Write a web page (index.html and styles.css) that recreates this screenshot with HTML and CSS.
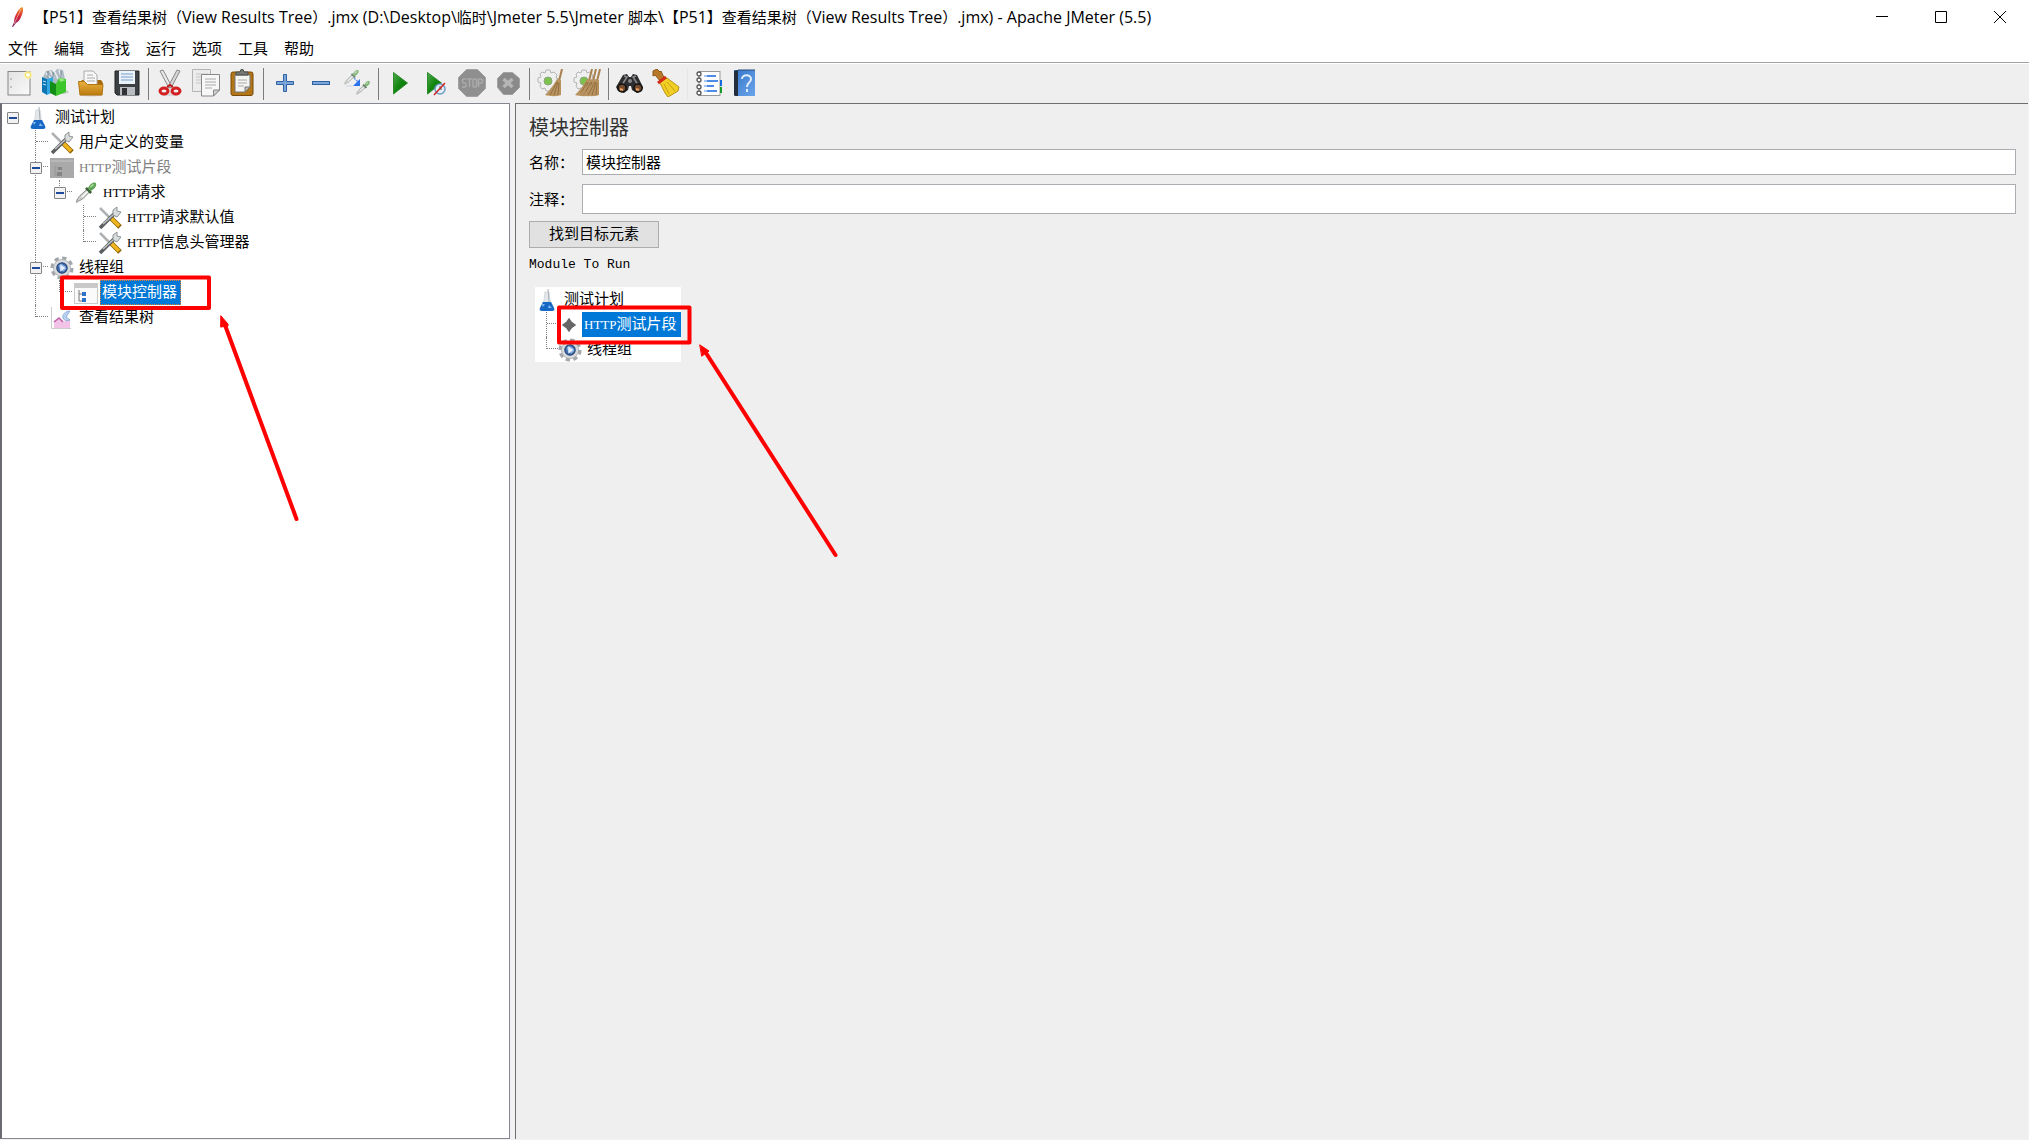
FILE: index.html
```
<!DOCTYPE html>
<html lang="zh-CN">
  <head>
    <meta charset="UTF-8">
    <title>Apache JMeter (5.5)</title>
    <link rel="stylesheet" href="styles.css">
  </head>
  <body>
    <!-- Shared icon shapes -->
    <svg class="defs" width="0" height="0" aria-hidden="true">
      <defs>
        <linearGradient id="g-paper" x1="0" y1="0" x2="1" y2="1">
          <stop offset="0" stop-color="#e2e2e2"/><stop offset="1" stop-color="#fafafa"/>
        </linearGradient>
        <linearGradient id="g-folder" x1="0" y1="0" x2="0" y2="1">
          <stop offset="0" stop-color="#e8b040"/><stop offset="1" stop-color="#bc7a0c"/>
        </linearGradient>
        <linearGradient id="g-play" x1="0" y1="0" x2="1" y2="1">
          <stop offset="0" stop-color="#4fa94f"/><stop offset="0.5" stop-color="#12860f"/><stop offset="1" stop-color="#0a6b0a"/>
        </linearGradient>
        <linearGradient id="g-book" x1="0" y1="0" x2="1" y2="1">
          <stop offset="0" stop-color="#3577cc"/><stop offset="1" stop-color="#6ba4ea"/>
        </linearGradient>
        <linearGradient id="g-feather" x1="0" y1="1" x2="0" y2="0">
          <stop offset="0" stop-color="#7b2a75"/><stop offset="0.5" stop-color="#d3203a"/><stop offset="1" stop-color="#f59a23"/>
        </linearGradient>

        <symbol id="feather" viewBox="0 0 14 22">
          <path d="M11 1c2 1 1 6-1 10-1 3-3 5-5 6l-3 4-1 0 2-5c0-5 4-13 8-15z" fill="url(#g-feather)"/>
          <path d="M10 3 3 18" stroke="#f6c1a8" stroke-width="0.7" fill="none"/>
        </symbol>

        <symbol id="new" viewBox="0 0 28 28">
          <rect x="3" y="2.500" width="22" height="23.500" fill="url(#g-paper)" stroke="#858585"/>
          <path d="M6 9v2M6 17v2" stroke="#999"/>
          <circle cx="23" cy="6" r="4" fill="#fff6a0" opacity="0.8"/>
          <circle cx="23" cy="6" r="2.500" fill="#fff" stroke="#f0dc50"/>
        </symbol>

        <symbol id="templates" viewBox="0 0 28 28">
          <ellipse cx="19" cy="23" rx="9" ry="2" fill="#c4cfc4"/>
          <path d="M2 8 5 2l6-1 2 3 3-4 6 1 2 9-9 8z" fill="#aebbc3"/>
          <path d="M5 4l5 6M9 2l4 7M14 3l3 7M18 1l3 9" stroke="#e8eef2" stroke-width="1.500"/>
          <path d="M7 2v7M12 3v6M20 2v7" stroke="#73838c"/>
          <path d="M1 8l5 2v16l-5-3z" fill="#0c75b4"/>
          <path d="M6 10l6-2v15l-6 3z" fill="#32a7e2"/>
          <path d="M2 12l3 1M2 15l3 1" stroke="#bfe6ff"/>
          <path d="M9 12l6 3v12l-6-3z" fill="#128d16"/>
          <path d="M15 15l3-6 7 1v13l-10 4z" fill="#3cc62c"/>
          <path d="M18 9l1 4 6-2" fill="#93e880"/>
        </symbol>

        <symbol id="open" viewBox="0 0 28 28">
          <ellipse cx="14" cy="26" rx="12" ry="1.500" fill="#cfcac0"/>
          <path d="M3 14l2-3h19l2 3v4H3z" fill="#a8690c"/>
          <path d="M7 17V2h9l4 4v11z" fill="#f7f7f7" stroke="#aaa"/>
          <path d="M10 6h6M10 9h8M10 12h8" stroke="#aaa"/>
          <path d="M1.500 12.500h6l3 3h15.500l-1 10.500h-22z" fill="url(#g-folder)" stroke="#b0750f"/>
        </symbol>

        <symbol id="save" viewBox="0 0 28 28">
          <path d="M2 2h24v24H4l-2-2z" fill="#3c3f43" stroke="#222"/>
          <rect x="6" y="2" width="16" height="13" fill="#eaf2fa"/>
          <path d="M8 5h12M8 8h12M8 11h12" stroke="#9fbbd8" stroke-width="1.500"/>
          <rect x="7" y="18" width="15" height="8" fill="#b9bcc0"/>
          <rect x="9" y="19" width="5" height="7" fill="#303236"/>
        </symbol>

        <symbol id="cut" viewBox="0 0 28 28">
          <ellipse cx="14" cy="25" rx="10" ry="2" fill="#dadada"/>
          <path d="M4 2l3-1 9 17-3 1z" fill="#e8e8e8" stroke="#888"/>
          <path d="M24 2l-3-1-9 17 3 1z" fill="#d5d5d5" stroke="#888"/>
          <ellipse cx="8" cy="22" rx="4" ry="3" fill="none" stroke="#d42020" stroke-width="3"/>
          <ellipse cx="20" cy="22" rx="4" ry="3" fill="none" stroke="#d42020" stroke-width="3"/>
          <path d="M11 18l3-2 3 2" fill="none" stroke="#c01818" stroke-width="2"/>
        </symbol>

        <symbol id="copy" viewBox="0 0 28 28">
          <path d="M.500.500h18v22H.500z" fill="#ececec" stroke="#b3b3b3"/>
          <path d="M4 5h12M4 8h5M4 11h5M4 14h5" stroke="#c5c5c5"/>
          <path d="M9.500 5.500h18V21l-6 6h-12z" fill="#f7f7f7" stroke="#888"/>
          <path d="M13 10h11M13 13h11M13 16h11M13 19h7" stroke="#aaa"/>
          <path d="M27.500 21h-6v6z" fill="#d0d0d0" stroke="#888"/>
        </symbol>

        <symbol id="paste" viewBox="0 0 28 28">
          <rect x="3" y="3" width="22" height="23.500" rx="2" fill="#b27618" stroke="#7a4b07"/>
          <path d="M7 6h15v12l-5 5H7z" fill="#f4f4f2" stroke="#777"/>
          <path d="M10 11h9M10 14h9M10 17h6" stroke="#aaa"/>
          <path d="M22 18h-5v5z" fill="#bdbdb8" stroke="#777"/>
          <path d="M8 6V3h4l1-2.500h2L16 3h4v3z" fill="#777a74" stroke="#4b4d48"/>
        </symbol>

        <symbol id="plus" viewBox="0 0 28 28">
          <path d="M12.500 5.500h3v7h7v3h-7v7h-3v-7h-7v-3h7z" fill="#7ba6d8" stroke="#2f62a5"/>
        </symbol>

        <symbol id="minus" viewBox="0 0 28 28">
          <rect x="5.500" y="12.500" width="17" height="3" fill="#7ba6d8" stroke="#2f62a5"/>
        </symbol>

        <symbol id="dropper" viewBox="0 0 28 28">
          <path d="M3 25c0-4 2-5 4-8l9-8 3 3-9 9c-3 2-5 2-7 4z" fill="#c9cec9" stroke="#7c827c"/>
          <path d="M9 19l8-8" stroke="#fff" stroke-width="1.500"/>
          <path d="M14 8l6 6" stroke="#3e5c3b" stroke-width="3"/>
          <path d="M16 9c2-5 6-8 9-7 2 2 1 6-6 10z" fill="#5fa354"/>
          <path d="M19 7l4-3" stroke="#a3d69a" stroke-width="2"/>
        </symbol>

        <symbol id="toggle" viewBox="0 0 28 28">
          <g opacity="0.700"><use href="#dropper" x="0" y="0" width="17" height="17"/></g>
          <g opacity="0.800"><use href="#dropper" x="12" y="11" width="16" height="16"/></g>
          <path d="M3 17h6" stroke="#ccd8e8"/>
          <path d="M11 9l4 4" stroke="#6f9ced" stroke-width="1.500" stroke-dasharray="2 1"/>
          <path d="M17 10v7h-7z" fill="#2b72ee"/>
        </symbol>

        <symbol id="start" viewBox="0 0 28 28">
          <path d="M7.500 3.500l14 10.500-14 11z" fill="url(#g-play)" stroke="#2e8b2e"/>
        </symbol>

        <symbol id="start-now" viewBox="0 0 28 28">
          <path d="M5.500 3.500l14 10.500-14 11z" fill="url(#g-play)" stroke="#2e8b2e"/>
          <circle cx="18" cy="20" r="5" fill="#e3effa" stroke="#6e9cc8" stroke-width="1.500"/>
          <path d="M18 17v3h2" fill="none" stroke="#555"/>
          <path d="M12 26L23 14" stroke="#d12020" stroke-width="1.500"/>
        </symbol>

        <symbol id="stop" viewBox="0 0 28 28">
          <path d="M8.500.500h11l8 8v11l-8 8h-11l-8-8v-11z" fill="#8f8f8f" stroke="#a2a2a2"/>
          <g fill="none" stroke="#ababab" stroke-width="1.500">
            <path d="M8 10H5.500l-1 1v2l1 1H7l1 1v2l-1 1H4M9 10h5M11.500 10v8"/>
            <rect x="15" y="10" width="3.500" height="8" rx="1"/>
            <path d="M20.500 18v-8h3l1 1v2l-1 1h-3"/>
          </g>
        </symbol>

        <symbol id="shutdown" viewBox="0 0 28 28">
          <path d="M9.500 3.500h9l7 6v9l-7 7h-9l-6-7v-9z" fill="#8a8a8a" stroke="#a2a2a2"/>
          <path d="M9.500 10l9 8M18.500 10l-9 8" stroke="#b5b5b5" stroke-width="3.500"/>
        </symbol>

        <symbol id="gear" viewBox="0 0 28 28">
          <circle cx="14" cy="14" r="11.500" fill="none" stroke="#a3a6aa" stroke-width="4" stroke-dasharray="5 4"/>
          <circle cx="14" cy="14" r="10" fill="#d9dbdd" stroke="#aaadb1" stroke-width="1"/>
          <circle cx="14" cy="14" r="6" fill="#426dad" stroke="#28487c" stroke-width="1.500"/>
          <path d="M10 11l3-2 5 3 1 3-3 3-4-1z" fill="#88addf"/>
          <path d="M12 10l6 4-6 4z" fill="#e6effb"/>
        </symbol>

        <symbol id="broom" viewBox="0 0 28 28">
          <path d="M25 0l-3 12" stroke="#a98250" stroke-width="2"/>
          <path d="M20 10l4 1v15c-6 2-11 1-16 0 4-4 8-9 12-16z" fill="#b8925f"/>
          <path d="M20 13l-7 13M21 13l-4 13M22 14l-1 12" stroke="#927042"/>
        </symbol>

        <symbol id="cog" viewBox="0 0 28 28">
          <path d="M9 1h4l1 3 3-1 3 3-1 3 3 1v4l-3 1 1 3-3 2-3-1-1 3H9l-1-3-3 1-2-3 1-3-3-1V9l3-1-1-3 2-2 3 1z" fill="#efefef" stroke="#b5b5b5"/>
          <circle cx="11" cy="12" r="4" fill="#7cc24d" stroke="#8ba67c"/>
        </symbol>

        <symbol id="clear" viewBox="0 0 28 28">
          <use href="#cog" width="28" height="28"/>
          <use href="#broom" width="28" height="28"/>
        </symbol>

        <symbol id="clear-all" viewBox="0 0 28 28">
          <use href="#cog" x="0" width="28" height="28"/>
          <use href="#broom" x="-6" width="28" height="28"/>
          <use href="#broom" x="-2" width="28" height="28"/>
          <use href="#broom" x="2" width="28" height="28"/>
        </symbol>

        <symbol id="search" viewBox="0 0 28 28">
          <path d="M7 6l4-1 2 3h2l2-3 4 1 6 12-1 4-5 2-5-3-1-4h-2l-1 4-4 3-6-2-2-4z" fill="#2d2d2f"/>
          <path d="M8 7l3 1-5 8M20 7l-3 1 5 8" fill="none" stroke="#8b8b8f" stroke-width="1.500"/>
          <circle cx="6" cy="19" r="4" fill="#764a2c" stroke="#111" stroke-width="1.500"/>
          <circle cx="22" cy="19" r="4" fill="#764a2c" stroke="#111" stroke-width="1.500"/>
          <path d="M4 20l3 1M20 20l3 1" stroke="#e3a069" stroke-width="2"/>
          <circle cx="14" cy="12" r="2" fill="#86868a"/>
        </symbol>

        <symbol id="reset" viewBox="0 0 28 28">
          <path d="M1 2l4-2 3 3 1-1 4 9-4 2-6-7-2 1z" fill="#b97728" stroke="#8b5718"/>
          <path d="M7 12l8-3 12 9-1 4-10 6-3-4z" fill="#f1cf25" stroke="#b99312"/>
          <path d="M12 15l5 10M15 13l8 9" stroke="#c8a011"/>
          <path d="M6 14l8-6" stroke="#d32b18" stroke-width="3"/>
        </symbol>

        <symbol id="functions" viewBox="0 0 28 28">
          <rect x="4" y="2.500" width="21" height="24" fill="#fdfdfd" stroke="#999"/>
          <path d="M26 11v6" stroke="#1769e0" stroke-width="2"/>
          <path d="M26 18v6" stroke="#149c25" stroke-width="2"/>
          <path d="M9 7h3M9 12h3M9 17h3M9 22h3" stroke="#8ab6f5" stroke-width="1.500"/>
          <path d="M12 7h9M12 12h11M12 17h7M12 22h10" stroke="#1465dd" stroke-width="1.500"/>
          <g fill="#fff" stroke="#555" stroke-width="1.300">
            <circle cx="4" cy="5" r="2"/><circle cx="4" cy="11" r="2"/><circle cx="4" cy="18" r="2"/><circle cx="4" cy="24" r="2"/>
          </g>
        </symbol>

        <symbol id="help" viewBox="0 0 28 28">
          <path d="M3 1h21v26H4l-1-1z" fill="url(#g-book)"/>
          <path d="M3 2l4-1v26H4l-1-1z" fill="#222e3e"/>
          <path d="M7 1h17" stroke="#2b4c79"/>
          <path d="M11 10c0-5 9-5 9 0 0 4-4 3-4 8" fill="none" stroke="#e3eefc" stroke-width="2"/>
          <rect x="15" y="20" width="2" height="3" fill="#e3eefc"/>
        </symbol>

        <symbol id="flask" viewBox="0 0 24 24">
          <path d="M10 4h4l1 9 4 7-1 2H6l-1-2 4-7z" fill="#e4e8eb" stroke="#d3d8dc"/>
          <path d="M13 1l1 13" stroke="#a9b0b6"/>
          <path d="M8 14h8l3 6c1 2 0 3-2 3H7c-2 0-3-1-2-3z" fill="#1767c5"/>
          <path d="M7 16h3l-2 3zM14 17l3 3h-4z" fill="#83bbf4"/>
        </symbol>

        <symbol id="tools" viewBox="0 0 24 24">
          <path d="M2 2l10 10" stroke="#aeb2b5" stroke-width="2.500"/>
          <path d="M13 12l9 9" stroke="#8c6105" stroke-width="5"/>
          <path d="M13 12l8 8" stroke="#efb51d" stroke-width="3.500"/>
          <path d="M2 22L16 8" stroke="#5b5f61" stroke-width="3.500"/>
          <path d="M5 18L15 9" stroke="#bfc3c4" stroke-width="1.500"/>
          <path d="M15 9V4l4-3v4l4 1-4 5z" fill="#d9dcdd" stroke="#8e9293"/>
        </symbol>

        <symbol id="fragment-off" viewBox="0 0 24 24">
          <rect y="2" width="24" height="20" fill="#a9a9a9"/>
          <path d="M1 5h22" stroke="#b7b7b7" stroke-width="2"/>
          <path d="M5 10v9h3M5 12h3" fill="none" stroke="#969696"/>
          <path d="M8 11h4v3H8zM7 16h5v4H7z" fill="#858585"/>
        </symbol>

        <symbol id="controller" viewBox="0 0 24 24">
          <rect x=".500" y="2.500" width="23" height="20" fill="#fafafa" stroke="#cacaca"/>
          <path d="M1 5h22" stroke="#c9c9c9" stroke-width="4"/>
          <path d="M5 9v11h4M5 13h4" fill="none" stroke="#777"/>
          <rect x="8" y="11" width="4" height="4" fill="#2f72c9"/>
          <rect x="8" y="17" width="4" height="4" fill="#2f72c9"/>
        </symbol>

        <symbol id="chart" viewBox="0 0 24 24">
          <path d="M1.500 1v21.500H21" fill="none" stroke="#ccc"/>
          <path d="M4 16l5-4 4 4 7-3v9H4z" fill="#f2c3e6"/>
          <path d="M4 16l5-4 4 4" fill="none" stroke="#c05ba5" stroke-width="1.500"/>
          <path d="M20 5c-5 0-8 4-7 7 1 3 5 3 7 2l-4-3z" fill="#b9d2f0" stroke="#8fb0d8"/>
        </symbol>

        <symbol id="diamond" viewBox="0 0 24 24">
          <path d="M11 6l2 3 4 3-4 3-2 3-2-3-4-3 4-3z" fill="#666" stroke="#666" stroke-width="1.500"/>
        </symbol>
      </defs>
    </svg>

    <header class="titlebar">
      <svg class="app-icon"><use href="#feather"/></svg>
      <h1>【<span>P51</span>】查看结果树（<span>View Results Tree</span>）<span>.jmx (D:\Desktop\</span>临时<span>\Jmeter 5.5\Jmeter </span>脚本<span>\</span>【<span>P51</span>】查看结果树（<span>View Results Tree</span>）<span>.jmx) - Apache JMeter (5.5)</span></h1>
      <div class="window-buttons">
        <button aria-label="最小化"><svg viewBox="0 0 12 12"><path d="M0 5.500h12"/></svg></button>
        <button aria-label="最大化"><svg viewBox="0 0 12 12"><path d="M.500.500h11v11H.500z"/></svg></button>
        <button aria-label="关闭"><svg viewBox="0 0 12 12"><path d="M0 0l12 12M12 0L0 12"/></svg></button>
      </div>
    </header>

    <nav class="menubar">
      <button>文件</button>
      <button>编辑</button>
      <button>查找</button>
      <button>运行</button>
      <button>选项</button>
      <button>工具</button>
      <button>帮助</button>
    </nav>

    <div class="toolbar" role="toolbar">
      <button aria-label="新建"><svg><use href="#new"/></svg></button>
      <button aria-label="模板"><svg><use href="#templates"/></svg></button>
      <button aria-label="打开"><svg><use href="#open"/></svg></button>
      <button aria-label="保存"><svg><use href="#save"/></svg></button>
      <span class="separator"></span>
      <button aria-label="剪切"><svg><use href="#cut"/></svg></button>
      <button aria-label="复制"><svg><use href="#copy"/></svg></button>
      <button aria-label="粘贴"><svg><use href="#paste"/></svg></button>
      <span class="separator"></span>
      <button aria-label="展开"><svg><use href="#plus"/></svg></button>
      <button aria-label="折叠"><svg><use href="#minus"/></svg></button>
      <button aria-label="切换"><svg><use href="#toggle"/></svg></button>
      <span class="separator"></span>
      <button aria-label="启动"><svg><use href="#start"/></svg></button>
      <button aria-label="不停顿开始"><svg><use href="#start-now"/></svg></button>
      <button aria-label="停止" disabled><svg><use href="#stop"/></svg></button>
      <button aria-label="关闭线程" disabled><svg><use href="#shutdown"/></svg></button>
      <span class="separator"></span>
      <button aria-label="清除"><svg><use href="#clear"/></svg></button>
      <button aria-label="清除全部"><svg><use href="#clear-all"/></svg></button>
      <span class="separator"></span>
      <button aria-label="搜索"><svg><use href="#search"/></svg></button>
      <button aria-label="重置搜索"><svg><use href="#reset"/></svg></button>
      <span class="separator faint"></span>
      <button aria-label="函数助手"><svg><use href="#functions"/></svg></button>
      <button aria-label="帮助"><svg><use href="#help"/></svg></button>
    </div>

    <main class="workspace">
      <!-- Test plan tree -->
      <ul class="tree plan-tree">
        <li>
          <span class="cell"><button class="toggle" aria-label="折叠"></button></span>
          <svg class="node-icon"><use href="#flask"/></svg>
          <span class="label">测试计划</span>
        </li>
        <li>
          <span class="cell"></span><span class="cell line branch"></span>
          <svg class="node-icon"><use href="#tools"/></svg>
          <span class="label">用户定义的变量</span>
        </li>
        <li>
          <span class="cell"></span><span class="cell line branch"><button class="toggle" aria-label="折叠"></button></span>
          <svg class="node-icon"><use href="#fragment-off"/></svg>
          <span class="label off"><span class="latin">HTTP</span>测试片段</span>
        </li>
        <li>
          <span class="cell"></span><span class="cell line"></span><span class="cell last branch"><button class="toggle" aria-label="折叠"></button></span>
          <svg class="node-icon"><use href="#dropper"/></svg>
          <span class="label"><span class="latin">HTTP</span>请求</span>
        </li>
        <li>
          <span class="cell"></span><span class="cell line"></span><span class="cell"></span><span class="cell line branch"></span>
          <svg class="node-icon"><use href="#tools"/></svg>
          <span class="label"><span class="latin">HTTP</span>请求默认值</span>
        </li>
        <li>
          <span class="cell"></span><span class="cell line"></span><span class="cell"></span><span class="cell last branch"></span>
          <svg class="node-icon"><use href="#tools"/></svg>
          <span class="label"><span class="latin">HTTP</span>信息头管理器</span>
        </li>
        <li>
          <span class="cell"></span><span class="cell line branch"><button class="toggle" aria-label="折叠"></button></span>
          <svg class="node-icon"><use href="#gear"/></svg>
          <span class="label">线程组</span>
        </li>
        <li>
          <span class="cell"></span><span class="cell line"></span><span class="cell last branch"></span>
          <svg class="node-icon"><use href="#controller"/></svg>
          <span class="label selected focused">模块控制器</span>
        </li>
        <li>
          <span class="cell"></span><span class="cell last branch"></span>
          <svg class="node-icon"><use href="#chart"/></svg>
          <span class="label">查看结果树</span>
        </li>
      </ul>

      <!-- Module controller settings -->
      <section class="editor">
        <h2>模块控制器</h2>
        <div class="field">
          <label for="name">名称：</label>
          <input type="text" id="name" value="模块控制器">
        </div>
        <div class="field comment">
          <label for="comment">注释：</label>
          <input type="text" id="comment">
        </div>
        <button class="find-target">找到目标元素</button>
        <p class="module-title">Module To Run</p>
        <ul class="tree module-tree">
          <li>
            <svg class="node-icon"><use href="#flask"/></svg>
            <span class="label">测试计划</span>
          </li>
          <li>
            <span class="cell line branch"></span>
            <svg class="node-icon"><use href="#diamond"/></svg>
            <span class="label selected"><span class="latin">HTTP</span>测试片段</span>
          </li>
          <li>
            <span class="cell last branch"></span>
            <svg class="node-icon"><use href="#gear"/></svg>
            <span class="label">线程组</span>
          </li>
        </ul>
      </section>
    </main>

    <!-- Red marks drawn over the window -->
    <svg class="marks" width="860" height="580" aria-hidden="true">
      <rect x="62" y="277.500" width="147" height="30.500"/>
      <path d="M296.500 519L225 325"/>
      <path class="head" d="M221 316l7 8v2l-7 1z"/>
      <rect x="559" y="307.500" width="130.500" height="35"/>
      <path d="M835.500 555L706 353"/>
      <path class="head" d="M700 345l9 6-7 5z"/>
    </svg>
  </body>
</html>
```
FILE: styles.css
```
* {
  box-sizing: border-box;
}
body {
  display: flex;
  flex-direction: column;
  height: 100vh;
  margin: 0;
  overflow: hidden;
  background-color: white;
  color: black;
  font-family: "Noto Sans CJK SC", sans-serif;
  font-size: 15px;
}
button {
  border: none;
  padding: 0;
  background: none;
  color: inherit;
  font: inherit;
}
.defs {
  position: absolute;
}
.latin {
  font-family: "Liberation Serif", serif;
  font-size: 13px;
}

/* Title bar */
.titlebar {
  display: flex;
  align-items: center;
  height: 34px;
  padding-left: 11px;
}
.app-icon {
  width: 14px;
  height: 22px;
}
.titlebar h1 {
  flex: 1;
  margin: 0 0 0 9px;
  font-size: 15px;
  font-weight: normal;
  line-height: 34px;
  white-space: nowrap;
}
.titlebar h1 span {
  font-family: "Open Sans", sans-serif;
  font-size: 16px;
  line-height: 24px;
}
.window-buttons {
  display: flex;
}
.window-buttons button {
  display: flex;
  align-items: center;
  justify-content: center;
  width: 59px;
  height: 34px;
}
.window-buttons svg {
  width: 12px;
  height: 12px;
  fill: none;
  stroke: black;
}

/* Menu */
.menubar {
  display: flex;
  gap: 16px;
  height: 28px;
  padding: 0 8px 2px;
}

/* Toolbar */
.toolbar {
  display: flex;
  height: 41px;
  padding-left: 1px;
  border-top: 1px solid #a0a0a0;
  background-color: #efefef;
  box-shadow: inset 0 1px white;
}
.toolbar button {
  display: flex;
  align-items: center;
  justify-content: center;
  width: 36px;
}
.toolbar svg {
  width: 28px;
  height: 28px;
}
.separator {
  width: 1px;
  margin: 5px 3px 3px;
  background-color: #7c7c7c;
}
.separator.faint {
  background-color: #e6e6e6;
}

/* Split panes */
.workspace {
  display: flex;
  flex: 1;
  gap: 5px;
  min-height: 0;
  padding: 0 1px 1px 0;
  background-color: #f2f2f2;
}
.plan-tree {
  width: 510px;
  border: 1px solid #828790;
  border-left: 2px solid #696b70;
  background-color: white;
}
.editor {
  flex: 1;
  padding: 0 12px 0 13px;
  border-top: 1px solid #6d6d6d;
  border-left: 1px solid #6d6d6d;
  background-color: #efefef;
}

/* Trees */
.tree {
  margin: 0;
  padding: 0;
  list-style: none;
}
.tree li {
  display: flex;
  align-items: center;
  height: 25px;
}
.cell {
  display: grid;
  grid-template-columns: 1fr 1fr;
  grid-template-rows: 12px 13px;
  width: 24px;
  height: 25px;
}
/* vertical half lines on the left, the branch on the right */
.line::before,
.last::before {
  content: "";
  grid-column: 1;
  grid-row: 1 / 3;
  border-right: 1px dotted #808080;
}
.last::before {
  grid-row: 1;
}
.branch::after {
  content: "";
  grid-column: 2;
  grid-row: 1;
  border-bottom: 1px dotted #808080;
}
.toggle {
  grid-area: 1 / 1 / 3 / 3;
  place-self: center;
  z-index: 1;
  width: 12px;
  height: 12px;
  border: 1px solid #848484;
  border-radius: 1px;
  background: linear-gradient(#1e4a9c, #1e4a9c) center / 8px 2px no-repeat, #f2f2f2;
}
.node-icon {
  width: 24px;
  height: 24px;
  margin: 0 2px;
}
.label {
  height: 25px;
  padding: 0 3px;
  line-height: 22px;
}
.label.off {
  color: #808080;
}
.label.selected {
  padding: 0 4px 0 2px;
  background-color: #0078d7;
  color: white;
}
.label.focused {
  outline: 1px dotted #e08030;
  outline-offset: -1px;
}
.plan-tree {
  padding-top: 1px;
}
.plan-tree .cell:first-child {
  width: 22px;
}
.module-tree {
  width: fit-content;
  margin: 6px 0 0 6px;
  background-color: white;
}
.module-tree .cell {
  width: 23px;
}
.module-tree .node-icon {
  margin: 0;
}
.module-tree .label {
  line-height: 21px;
}
.module-tree .label:not(.selected) {
  padding: 0 5px;
}

/* Settings form */
.editor h2 {
  margin: 0;
  color: #333;
  font-size: 20px;
  font-weight: normal;
  line-height: 45px;
}
.field {
  display: grid;
  grid-template-columns: 53px 1fr;
  align-items: center;
  height: 26px;
  margin-bottom: 9px;
}
.field.comment {
  height: 30px;
  margin-bottom: 7px;
}
.field label {
  padding-bottom: 1px;
}
.field input {
  width: 100%;
  height: 100%;
  padding: 0 3px 2px;
  border: 1px solid #abadb3;
  background-color: white;
  color: black;
  font: inherit;
}
.find-target {
  display: block;
  height: 27px;
  padding: 0 19px 3px;
  border: 1px solid #adadad;
  background-color: #e1e1e1;
  line-height: 22px;
}
.module-title {
  margin: 0;
  font-family: "Liberation Mono", monospace;
  font-size: 13px;
  line-height: 33px;
}

/* Arrows and frames */
.marks {
  position: absolute;
  top: 0;
  left: 0;
  fill: none;
  stroke: red;
  stroke-width: 4;
  stroke-linecap: round;
  stroke-linejoin: round;
  pointer-events: none;
}
.marks .head {
  fill: red;
  stroke-width: 1;
}
```
